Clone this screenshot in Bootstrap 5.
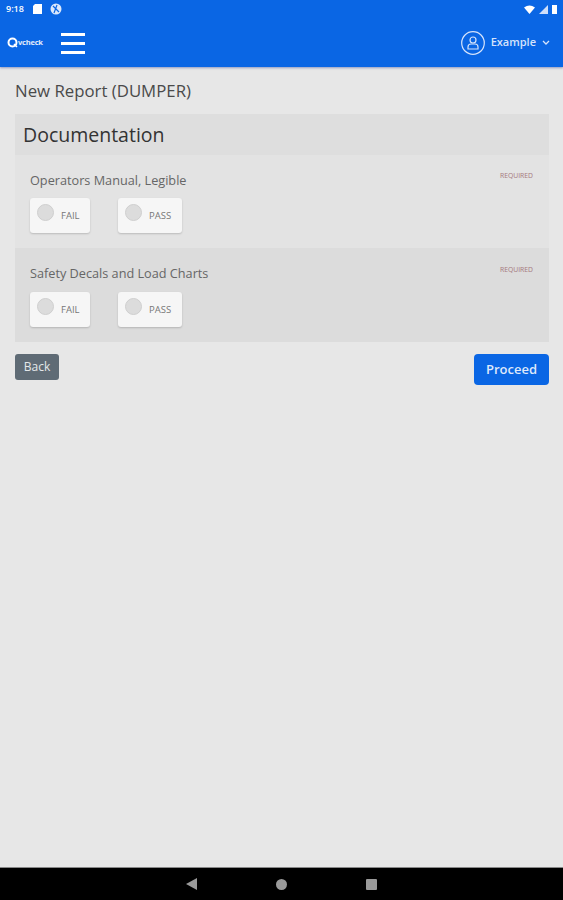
<!DOCTYPE html>
<html lang="en">
<head>
  <meta charset="UTF-8" />
  <meta name="viewport" content="width=device-width, initial-scale=1.0"/>
  <title>New Report</title>
  <link href="https://cdn.jsdelivr.net/npm/bootstrap@5.3.3/dist/css/bootstrap.min.css" rel="stylesheet"/>
  <style>
    html, body { height: 100%; }
    body {
      background: #e7e7e7;
      font-family: "Open Sans", sans-serif;
      color: #555;
      height: 900px;
      overflow: hidden;
    }
    .app-top { background: #0a66e4; height: 67px; box-shadow: 0 1px 2px rgba(60, 80, 160, .5); color: #fff; }
    .status-row { height: 18px; padding: 0 5px 0 6px; font-size: 9px; font-weight: 600; }
    .status-doc { margin-left: 1px; }
    .tool-row { height: 49px; padding: 0 13px 0 7px; }
    .logo-text { font-size: 7.5px; font-weight: 700; letter-spacing: -.2px; line-height: 1; color: #e3ecfb; }
    .burger { width: 24px; margin: 2px 0 0 18px; }
    .burger span { display: block; height: 3px; background: #fff; margin: 6px 0; }
    .user-name { font-size: 11px; font-weight: 600; color: #d5e3fb; margin: 0 6px 0 6px; }
    .page-main { padding: 0 14px 0 15px; }
    .page-title { font-size: 16.8px; font-weight: 400; color: #4a4a4a; margin: 14px 0 13px; line-height: 20px; }
    .section-head { background: #dedede; height: 41px; padding-left: 8px; font-size: 19.5px; color: #333; line-height: 41px; }
    .check-row { height: 94px; padding: 15px 15px 0; position: relative; }
    .check-row.odd { background: #e3e3e3; height: 93px; }
    .check-row.even { background: #dcdcdc; }
    .check-label { font-size: 12.7px; line-height: 20px; color: #666; margin-bottom: 9px; }
    .check-row.odd .check-label { margin-bottom: 8px; }
    .required-tag { position: absolute; top: 17px; right: 16px; font-size: 6.8px; line-height: 8px; color: #a5797e; text-transform: uppercase; }
    .check-row.even .required-tag { top: 18px; }
    .choice-box { background: #f6f6f6; height: 35px; border-radius: 3px; box-shadow: 0 1px 2px rgba(0, 0, 0, .18); padding: 6px 0 0 7px; font-size: 9.5px; color: #777; }
    .choice-box.fail { width: 60px; margin-right: 28px; }
    .choice-box.pass { width: 64px; }
    .choice-dot { width: 17px; height: 17px; border-radius: 50%; background: #dcdcdc; border: 1px solid #cfcfcf; margin-right: 7px; }
    .choice-box span:last-child { margin-top: 5px; }
    .btn-back { background: #5f6b75; color: #e4e8ea; font-size: 12px; font-weight: 400; width: 44px; height: 26px; padding: 0; border-radius: 3px; border: 0; }
    .btn-proceed { background: #0a66e4; color: #dfe9fb; font-size: 13px; font-weight: 600; width: 75px; height: 31px; padding: 0; border-radius: 4px; border: 0; }
    .nav-strip { height: 33px; background: #000; border-top: 1px solid #888; padding-left: 186px; gap: 79px; }
  </style>
</head>
<body class="d-flex flex-column">

  <div class="app-top">
    <div class="status-row d-flex align-items-center justify-content-between">
      <div class="d-flex align-items-center gap-2">
        <span>9:18</span>
        <svg class="status-doc" width="9" height="10" viewBox="0 0 9 10"><path d="M2 0h7v10H0V2z" fill="#fff"/></svg>
        <svg width="12" height="12" viewBox="0 0 12 12"><circle cx="6" cy="6" r="5.500" fill="#dce8fb"/><path d="M3 3l6 6M7 2L4 10" stroke="#0a66e4" stroke-width="1.200"/></svg>
      </div>
      <div class="d-flex align-items-center gap-1">
        <svg width="11" height="9" viewBox="0 0 11 9"><path d="M0 2.500Q5.500-1.500 11 2.500L5.500 9z" fill="#fff"/></svg>
        <svg width="9" height="9" viewBox="0 0 9 9"><path d="M9 0v9H0z" fill="#cfdffa"/></svg>
        <svg width="6" height="10" viewBox="0 0 6 10"><path d="M1 1h4v9H0V1z" fill="#fff"/></svg>
      </div>
    </div>
    <div class="tool-row d-flex align-items-center">
      <div class="d-flex align-items-center">
        <svg width="11" height="11" viewBox="0 0 11 11"><circle cx="5.500" cy="5.500" r="4" fill="none" stroke="#fff" stroke-width="2"/><path d="M7 7l3 3" stroke="#fff" stroke-width="1.500"/></svg>
        <span class="logo-text">vcheck</span>
      </div>
      <div class="burger"><span></span><span></span><span></span></div>
      <div class="ms-auto d-flex align-items-center">
        <svg width="24" height="24" viewBox="0 0 24 24" fill="none" stroke="#d5e3fb" stroke-width="1.200"><circle cx="12" cy="12" r="11.300"/><circle cx="12" cy="9" r="3"/><path d="M7 18v-2q0-3 3-3h4q3 0 3 3v2z"/></svg>
        <span class="user-name">Example</span>
        <svg width="8" height="5" viewBox="0 0 8 5"><path d="M1 1l3 3 3-3" fill="none" stroke="#d5e3fb" stroke-width="1.300"/></svg>
      </div>
    </div>
  </div>

  <main class="page-main flex-grow-1">
    <h1 class="page-title">New Report (DUMPER)</h1>

    <div class="section-head">Documentation</div>

    <div class="check-row odd">
      <div class="check-label">Operators Manual, Legible</div>
      <span class="required-tag">Required</span>
      <div class="d-flex">
        <div class="choice-box fail d-flex"><span class="choice-dot"></span><span>FAIL</span></div>
        <div class="choice-box pass d-flex"><span class="choice-dot"></span><span>PASS</span></div>
      </div>
    </div>

    <div class="check-row even">
      <div class="check-label">Safety Decals and Load Charts</div>
      <span class="required-tag">Required</span>
      <div class="d-flex">
        <div class="choice-box fail d-flex"><span class="choice-dot"></span><span>FAIL</span></div>
        <div class="choice-box pass d-flex"><span class="choice-dot"></span><span>PASS</span></div>
      </div>
    </div>

    <div class="d-flex justify-content-between align-items-start mt-2 pt-1">
      <button class="btn btn-back">Back</button>
      <button class="btn btn-proceed">Proceed</button>
    </div>
  </main>

  <div class="nav-strip d-flex align-items-center">
    <svg width="11" height="12" viewBox="0 0 11 12"><path d="M11 0v12L0 6z" fill="#9a9a9a"/></svg>
    <svg width="11" height="11" viewBox="0 0 11 11"><circle cx="5.500" cy="5.500" r="5.500" fill="#9a9a9a"/></svg>
    <svg width="11" height="11" viewBox="0 0 11 11"><rect width="11" height="11" rx="1" fill="#9a9a9a"/></svg>
  </div>

  <script src="https://cdn.jsdelivr.net/npm/bootstrap@5.3.3/dist/js/bootstrap.bundle.min.js"></script>
</body>
</html>
